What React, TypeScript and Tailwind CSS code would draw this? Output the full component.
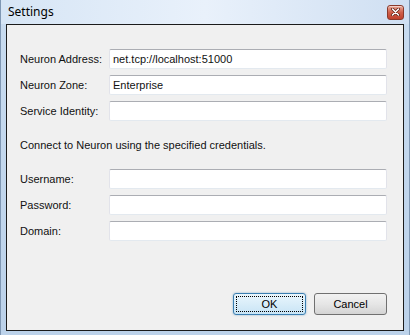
import React from 'react';

const fields1 = [
  { label: 'Neuron Address:', value: 'net.tcp://localhost:51000' },
  { label: 'Neuron Zone:', value: 'Enterprise' },
  { label: 'Service Identity:', value: '' },
];

const fields2 = [
  { label: 'Username:', value: '' },
  { label: 'Password:', value: '' },
  { label: 'Domain:', value: '' },
];

function Row({ label, value }: { label: string; value: string }) {
  return (
    <div className="flex items-center h-[20px]">
      <div className="w-[89px] shrink-0 text-[11px] text-[#111] leading-none">{label}</div>
      <div className="w-[278px] h-[20px] bg-white border border-[#e2e3ea] border-t-[#abadb3] border-b-[#e3e9ef] rounded-[2px] flex items-center px-[3px] text-[11px] text-[#111] leading-none">
        {value}
      </div>
    </div>
  );
}

function CloseButton() {
  return (
    <div className="w-[17px] h-[15px] rounded-[3px] border border-[#8a3a2c] bg-gradient-to-b from-[#e9a695] via-[#cf5f4a] to-[#c0412d] flex items-center justify-center shadow-[inset_0_1px_0_rgba(255,255,255,0.5)]">
      <svg width="9" height="8" viewBox="0 0 9 8">
        <path d="M1.5 1 L7.5 7 M7.5 1 L1.5 7" stroke="#5a1a10" strokeWidth="3" strokeLinecap="round" />
        <path d="M1.5 1 L7.5 7 M7.5 1 L1.5 7" stroke="#ffffff" strokeWidth="1.6" strokeLinecap="round" />
      </svg>
    </div>
  );
}

export default function App() {
  return (
    <div
      className="w-[410px] h-[335px] flex flex-col overflow-hidden border-x border-[#7f97b3] bg-gradient-to-b from-[#c9dcf0] to-[#bcd2ea]"
      style={{ fontFamily: '"Liberation Sans", Arial, sans-serif' }}
    >
      {/* Title bar */}
      <div className="h-[24px] shrink-0 flex items-center justify-between pl-[7px] pr-[5px] bg-gradient-to-r from-[#d6e5f5] via-[#e9f1fb] to-[#cfdff2]">
        <span className="text-[12px] text-black leading-none" style={{ fontFamily: '"Noto Sans", "Open Sans", sans-serif' }}>
          Settings
        </span>
        <CloseButton />
      </div>

      {/* Client area */}
      <div className="flex-1 ml-[5px] mr-[5px] mb-[4px] border border-[#1b1b1b] bg-[#f0f0f0] flex flex-col pl-[13px] pt-[24px] pb-[15px]">
        <div className="flex flex-col gap-[6px]">
          {fields1.map((f) => (
            <Row key={f.label} {...f} />
          ))}
        </div>

        <div className="mt-[19px] text-[11px] text-[#111] leading-none">
          Connect to Neuron using the specified credentials.
        </div>

        <div className="mt-[18px] flex flex-col gap-[6px]">
          {fields2.map((f) => (
            <Row key={f.label} {...f} />
          ))}
        </div>

        <div className="mt-auto flex justify-end gap-[8px] pr-[16px]">
          <button className="w-[73px] h-[22px] rounded-[3px] border border-[#3c7fb1] bg-gradient-to-b from-[#eaf6fd] to-[#c8e4f5] p-[2px] shadow-[0_0_2px_rgba(60,127,177,0.6)]">
            <div className="w-full h-full border border-dotted border-black flex items-center justify-center text-[11px] text-black leading-none">
              OK
            </div>
          </button>
          <button className="w-[73px] h-[22px] rounded-[3px] border border-[#707070] bg-gradient-to-b from-[#f2f2f2] via-[#e6e6e6] to-[#d4d4d4] flex items-center justify-center text-[11px] text-black leading-none">
            Cancel
          </button>
        </div>
      </div>
    </div>
  );
}
